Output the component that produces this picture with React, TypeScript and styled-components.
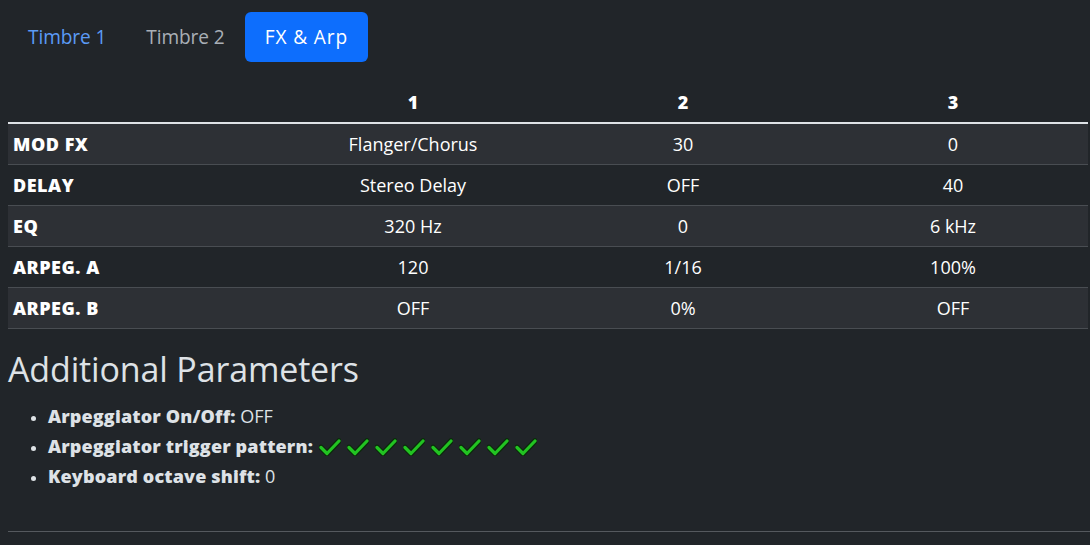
import React from "react";
import styled, { createGlobalStyle } from "styled-components";

const Global = createGlobalStyle`
  html, body { margin: 0; padding: 0; background: #212529; overflow: hidden; }
  body { font-family: "Open Sans", "Noto Sans", sans-serif; color: #dee2e6; }
`;

const Page = styled.div`
  width: 1082px;
  padding: 12px 0 0 8px;
`;

const Pills = styled.nav`
  display: flex;
  margin-bottom: 20px;
`;

const Pill = styled.a<{ $active?: boolean; $muted?: boolean }>`
  display: block;
  padding: 10px 20px;
  font-size: 19.1px;
  line-height: 30px;
  border-radius: 6px;
  letter-spacing: ${(p) => (p.$active ? "0.9px" : "-0.1px")};
  color: ${(p) => (p.$active ? "#ffffff" : p.$muted ? "#a9afb6" : "#5b9bf6")};
  background: ${(p) => (p.$active ? "#0d6efd" : "transparent")};
`;

const Table = styled.table`
  width: 1080px;
  table-layout: fixed;
  border-collapse: collapse;
  font-size: 18px;
  color: #ffffff;
`;

const Th = styled.th`
  height: 40px;
  padding: 0 6px;
  font-weight: 800;
  text-align: center;
  border-bottom: 2px solid #dee2e6;
  vertical-align: middle;
`;

const Row = styled.tr<{ $striped?: boolean }>`
  background: ${(p) => (p.$striped ? "#2d3035" : "transparent")};
  border-bottom: 1px solid #494d52;
`;

const Label = styled.th`
  height: 40px;
  padding: 0 5px;
  text-align: left;
  font-weight: 800;
  letter-spacing: 0.5px;
`;

const Cell = styled.td`
  height: 40px;
  padding: 0 6px;
  text-align: center;
`;

const Heading = styled.h2`
  margin: 18px 0 10px 0;
  font-size: 34px;
  font-weight: 400;
  line-height: 44px;
  letter-spacing: -0.15px;
  color: #dee2e6;
`;

const List = styled.ul`
  margin: 0;
  padding-left: 40px;
  font-size: 18px;
  line-height: 30px;
  li::marker { font-size: 15px; }
`;

const Strong = styled.b`
  font-weight: 800;
  letter-spacing: 0.15px;
`;

const Checks = styled.span`
  display: inline-flex;
  gap: 6px;
  vertical-align: -3px;
  margin-left: 6px;
`;

const Rule = styled.hr`
  margin: 40px 0 0 0;
  border: 0;
  border-top: 1px solid #55595e;
`;

const Check = () => (
  <svg width="22" height="18" viewBox="0 0 22 18">
    <polyline points="2,9.5 8,15.5 20,3" fill="none" stroke="#0b2a0b" strokeWidth="5.5" strokeLinecap="round" strokeLinejoin="round" />
    <polyline points="2,9.5 8,15.5 20,3" fill="none" stroke="#22c322" strokeWidth="3.2" strokeLinecap="round" strokeLinejoin="round" />
  </svg>
);

const rows = [
  ["MOD FX", "Flanger/Chorus", "30", "0"],
  ["DELAY", "Stereo Delay", "OFF", "40"],
  ["EQ", "320 Hz", "0", "6 kHz"],
  ["ARPEG. A", "120", "1/16", "100%"],
  ["ARPEG. B", "OFF", "0%", "OFF"],
];

export default function App() {
  return (
    <>
      <Global />
      <Page>
        <Pills>
          <Pill>Timbre 1</Pill>
          <Pill $muted>Timbre 2</Pill>
          <Pill $active>FX &amp; Arp</Pill>
        </Pills>
        <Table>
          <thead>
            <tr>
              <Th></Th>
              <Th>1</Th>
              <Th>2</Th>
              <Th>3</Th>
            </tr>
          </thead>
          <tbody>
            {rows.map((r, i) => (
              <Row key={r[0]} $striped={i % 2 === 0}>
                <Label>{r[0]}</Label>
                <Cell>{r[1]}</Cell>
                <Cell>{r[2]}</Cell>
                <Cell>{r[3]}</Cell>
              </Row>
            ))}
          </tbody>
        </Table>
        <Heading>Additional Parameters</Heading>
        <List>
          <li>
            <Strong>Arpeggiator On/Off:</Strong> OFF
          </li>
          <li>
            <Strong>Arpeggiator trigger pattern:</Strong>
            <Checks>
              {Array.from({ length: 8 }).map((_, i) => (
                <Check key={i} />
              ))}
            </Checks>
          </li>
          <li>
            <Strong>Keyboard octave shift:</Strong> 0
          </li>
        </List>
        <Rule />
      </Page>
    </>
  );
}
